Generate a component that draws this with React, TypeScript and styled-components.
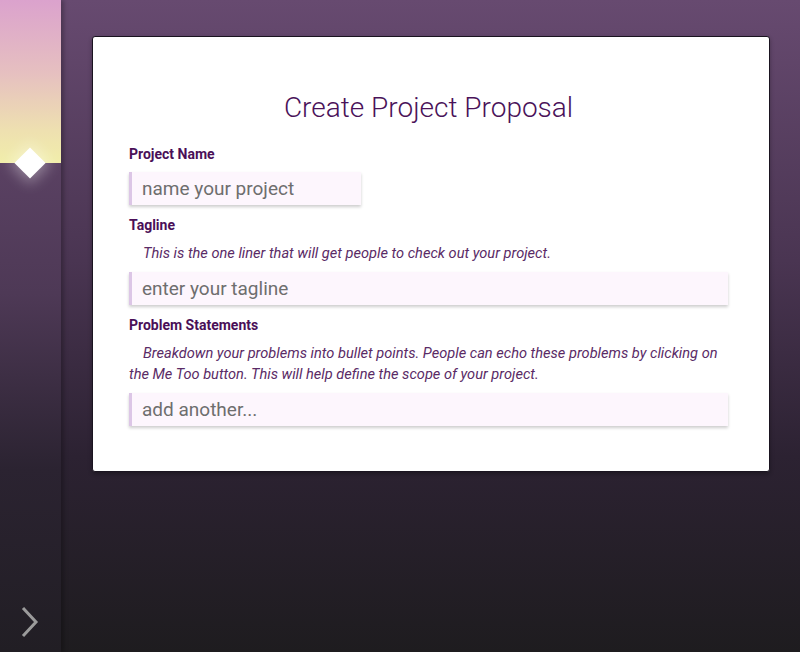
import React from "react";
import styled, { createGlobalStyle } from "styled-components";

const Global = createGlobalStyle`
  html, body { margin: 0; padding: 0; height: 100%; }
  body {
    font-family: "Roboto", "Liberation Sans", sans-serif;
    background: #1f1c20;
  }
  #root { height: 100%; }
`;

const Page = styled.div`
  display: flex;
  width: 800px;
  height: 652px;
  background: linear-gradient(180deg, #674a70 0%, #4a3552 40%, #2c2232 70%, #1e1c1f 100%);
  overflow: hidden;
`;

const Sidebar = styled.aside`
  width: 61px;
  flex-shrink: 0;
  display: flex;
  flex-direction: column;
  background: linear-gradient(180deg, #694b72 0%, #4e3956 45%, #2b2331 72%, #211e24 100%);
  box-shadow: 3px 0 4px rgba(0, 0, 0, 0.25);
  position: relative;
  z-index: 1;
`;

const Banner = styled.div`
  height: 163px;
  position: relative;
  background: linear-gradient(180deg, #dba2cd 0%, #e6c0c0 45%, #eee0b0 80%, #f1eeaa 100%);
`;

const Diamond = styled.div`
  position: absolute;
  left: 19px;
  bottom: -11px;
  width: 22px;
  height: 22px;
  background: #ffffff;
  transform: rotate(45deg);
  box-shadow: 0 0 14px 4px rgba(255, 255, 255, 0.35);
`;

const Spacer = styled.div`
  flex: 1;
`;

const Toggle = styled.button`
  background: none;
  border: none;
  padding: 0;
  margin: 0 0 14px 20px;
  width: 22px;
  height: 32px;
  cursor: pointer;
  display: flex;
  align-items: center;
`;

const Main = styled.main`
  flex: 1;
  padding: 36px 30px 0 31px;
`;

const Card = styled.section`
  background: #ffffff;
  border: 1px solid #1a1420;
  border-radius: 3px;
  padding: 54px 41px 34px 36px;
  box-shadow: 0 2px 4px rgba(0, 0, 0, 0.3);
`;

const Title = styled.h1`
  margin: 0 0 20px;
  text-align: center;
  font-weight: 300;
  font-size: 28px;
  line-height: 34px;
  color: #4a1259;
`;

const Label = styled.label`
  display: block;
  font-weight: 700;
  font-size: 14px;
  line-height: 18px;
  color: #4a0f58;
  margin: 0 0 9px;
`;

const Help = styled.p`
  margin: 0 0 8px;
  font-style: italic;
  font-size: 14.6px;
  line-height: 21px;
  color: #5a2b66;
  text-indent: 14px;
`;

const Field = styled.input<{ $width?: number }>`
  display: block;
  box-sizing: border-box;
  width: ${(p) => (p.$width ? `${p.$width}px` : "100%")};
  height: 33px;
  margin: 0 0 11px;
  padding: 0 10px;
  border: none;
  border-left: 3px solid #dcc6e6;
  background: #fdf6fd;
  box-shadow: 0 2px 3px rgba(0, 0, 0, 0.2);
  font-family: inherit;
  font-size: 19px;
  color: #333;
  outline: none;
  &::placeholder {
    color: #6e6e6e;
  }
`;

export default function App() {
  return (
    <>
      <Global />
      <Page>
        <Sidebar>
          <Banner>
            <Diamond />
          </Banner>
          <Spacer />
          <Toggle aria-label="expand">
            <svg width="20" height="32" viewBox="0 0 20 32">
              <path d="M3 2 L16 16 L3 30" fill="none" stroke="#9b9b9b" strokeWidth="3" strokeLinejoin="miter" />
            </svg>
          </Toggle>
        </Sidebar>
        <Main>
          <Card>
            <Title>Create Project Proposal</Title>
            <Label>Project Name</Label>
            <Field $width={232} placeholder="name your project" />
            <Label>Tagline</Label>
            <Help>This is the one liner that will get people to check out your project.</Help>
            <Field placeholder="enter your tagline" />
            <Label>Problem Statements</Label>
            <Help>
              Breakdown your problems into bullet points. People can echo these problems by clicking on the Me Too
              button. This will help define the scope of your project.
            </Help>
            <Field placeholder="add another..." />
          </Card>
        </Main>
      </Page>
    </>
  );
}
